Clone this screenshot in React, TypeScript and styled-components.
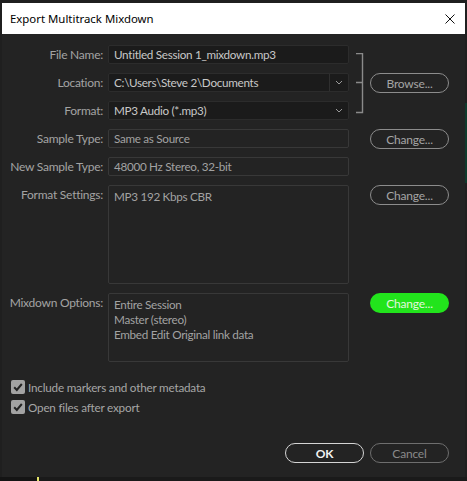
import React from "react";
import styled, { createGlobalStyle } from "styled-components";

const Global = createGlobalStyle`
  html, body { margin: 0; padding: 0; background: #1f1f1f; }
  body { width: 467px; height: 481px; overflow: hidden; font-family: Lato, "Noto Sans", sans-serif; }
  #root { width: 467px; height: 481px; }
`;

const Page = styled.div`
  display: flex;
  width: 467px;
  height: 481px;
  padding-top: 3px;
  box-sizing: border-box;
  background: #1f1f1f;
`;

const EdgeLeft = styled.div`
  width: 2px;
  flex: none;
`;

const EdgeRight = styled.div`
  width: 2px;
  flex: none;
  background: linear-gradient(
    to bottom,
    transparent 0px,
    transparent 100px,
    #0f3a2c 100px,
    #0f3a2c 180px,
    transparent 180px
  );
`;

const Dialog = styled.div`
  flex: 1;
  display: flex;
  flex-direction: column;
  background: #232323;
`;

const TitleBar = styled.div`
  height: 31px;
  background: #ffffff;
  display: flex;
  align-items: center;
  justify-content: space-between;
  padding: 0 10px 0 8px;
  font-family: "Noto Sans", "Open Sans", sans-serif;
  font-size: 11.4px;
  color: #000;
`;

const Content = styled.div`
  flex: 1;
  display: flex;
  flex-direction: column;
  padding: 11px 16px 0 0;
`;

const Form = styled.div`
  display: grid;
  grid-template-columns: 106px 241px 21px 79px;
  row-gap: 9px;
  grid-template-rows: 19px 19px 19px 19px 19px 99px 69px;
  align-items: start;
`;

const Label = styled.div<{ $row: number }>`
  grid-column: 1;
  grid-row: ${(p) => p.$row};
  text-align: right;
  padding-right: 5px;
  padding-top: 2px;
  font-size: 12px;
  color: #a3a3a3;
  white-space: nowrap;
  letter-spacing: -0.25px;
`;

const Field = styled.div<{ $row: number; $dark?: boolean; $h?: number }>`
  grid-column: 2;
  grid-row: ${(p) => p.$row};
  height: ${(p) => (p.$h ? p.$h : 19)}px;
  box-sizing: border-box;
  border: 1px solid ${(p) => (p.$dark ? "#2c2c2c" : "#383838")};
  background: ${(p) => (p.$dark ? "#1b1b1b" : "#232323")};
  border-radius: 2px;
  display: flex;
  align-items: ${(p) => (p.$h ? "flex-start" : "center")};
  padding: ${(p) => (p.$h ? "3px 0 0 5px" : "0 0 0 5px")};
  font-size: 11.7px;
  color: ${(p) => (p.$dark ? "#c8c8c8" : "#a2a2a2")};
  white-space: nowrap;
  overflow: hidden;
  letter-spacing: -0.3px;
`;

const FieldText = styled.span`
  flex: 1;
  line-height: 15px;
`;

const Lines = styled.div`
  display: flex;
  flex-direction: column;
  line-height: 15px;
`;

const DropDivider = styled.div<{ $line?: boolean }>`
  width: 18px;
  align-self: stretch;
  border-left: ${(p) => (p.$line ? "1px solid #2f2f2f" : "1px solid transparent")};
  display: flex;
  align-items: center;
  justify-content: center;
`;

const BracketCell = styled.div`
  grid-column: 3;
  grid-row: 1 / 4;
  align-self: stretch;
  display: flex;
  justify-content: flex-start;
  padding-top: 8px;
`;

const Pill = styled.button<{ $row?: number; $variant?: "normal" | "green" | "ok" | "cancel" }>`
  grid-column: 4;
  grid-row: ${(p) => p.$row ?? "auto"};
  width: 79px;
  height: 20px;
  border-radius: 10px;
  box-sizing: border-box;
  font-family: Lato, "Noto Sans", sans-serif;
  font-size: 12px;
  letter-spacing: -0.2px;
  padding: 0;
  cursor: default;
  background: ${(p) => (p.$variant === "green" ? "#22e41c" : "transparent")};
  border: ${(p) =>
    p.$variant === "green"
      ? "none"
      : p.$variant === "ok"
      ? "1.5px solid #d4d4d4"
      : p.$variant === "cancel"
      ? "1.5px solid #6e6e6e"
      : "1.5px solid #8c8c8c"};
  color: ${(p) =>
    p.$variant === "green"
      ? "#e2f7df"
      : p.$variant === "ok"
      ? "#f2f2f2"
      : p.$variant === "cancel"
      ? "#8a8a8a"
      : "#a5a5a5"};
  font-weight: ${(p) => (p.$variant === "ok" ? 700 : 400)};
`;

const Checks = styled.div`
  display: flex;
  flex-direction: column;
  gap: 6px;
  padding: 18px 0 0 9px;
`;

const CheckRow = styled.label`
  display: flex;
  align-items: center;
  gap: 3px;
  font-size: 11.7px;
  color: #a6a6a6;
  height: 14px;
  letter-spacing: -0.2px;
`;

const Box = styled.span`
  width: 14px;
  height: 14px;
  border-radius: 2px;
  background: #a3a3a3;
  display: flex;
  align-items: center;
  justify-content: center;
  flex: none;
`;

const Footer = styled.div`
  margin-top: auto;
  display: flex;
  justify-content: flex-end;
  gap: 6px;
  padding-bottom: 14px;
`;

const BottomStrip = styled.div`
  height: 4px;
  margin: 0 -2px;
  background: linear-gradient(
    to right,
    #141414 0px,
    #141414 37px,
    #e4e46a 37px,
    #e4e46a 39px,
    #1a1a1a 39px
  );
`;

const Chevron = () => (
  <svg width="8" height="5" viewBox="0 0 8 5">
    <path d="M1 1 L4 4 L7 1" fill="none" stroke="#9a9a9a" strokeWidth="1" />
  </svg>
);

const CheckMark = () => (
  <svg width="12" height="12" viewBox="0 0 12 12">
    <path d="M2.2 6.3 L4.8 8.9 L9.8 3" fill="none" stroke="#242424" strokeWidth="2" />
  </svg>
);

const CloseIcon = () => (
  <svg width="10" height="10" viewBox="0 0 10 10">
    <path d="M0.5 0.5 L9.5 9.5 M9.5 0.5 L0.5 9.5" stroke="#111" strokeWidth="1" />
  </svg>
);

const Bracket = () => (
  <svg width="16" height="61" viewBox="0 0 16 61">
    <path d="M7 0.5 H13.5 V59.5 H7 M7 29.5 H13.5" fill="none" stroke="#8a8a8a" strokeWidth="1.4" />
  </svg>
);

export default function App() {
  return (
    <>
      <Global />
      <Page>
        <EdgeLeft />
        <Dialog>
          <TitleBar>
            <span>Export Multitrack Mixdown</span>
            <CloseIcon />
          </TitleBar>
          <Content>
            <Form>
              <Label $row={1}>File Name:</Label>
              <Field $row={1} $dark>
                <FieldText>Untitled Session 1_mixdown.mp3</FieldText>
              </Field>

              <Label $row={2}>Location:</Label>
              <Field $row={2} $dark>
                <FieldText>C:\Users\Steve 2\Documents</FieldText>
                <DropDivider $line>
                  <Chevron />
                </DropDivider>
              </Field>
              <Pill $row={2}>Browse...</Pill>

              <Label $row={3}>Format:</Label>
              <Field $row={3} $dark>
                <FieldText>MP3 Audio (*.mp3)</FieldText>
                <DropDivider>
                  <Chevron />
                </DropDivider>
              </Field>

              <BracketCell>
                <Bracket />
              </BracketCell>

              <Label $row={4}>Sample Type:</Label>
              <Field $row={4}>
                <FieldText>Same as Source</FieldText>
              </Field>
              <Pill $row={4}>Change...</Pill>

              <Label $row={5}>New Sample Type:</Label>
              <Field $row={5}>
                <FieldText>48000 Hz Stereo, 32-bit</FieldText>
              </Field>

              <Label $row={6}>Format Settings:</Label>
              <Field $row={6} $h={99}>
                <FieldText>MP3 192 Kbps CBR</FieldText>
              </Field>
              <Pill $row={6}>Change...</Pill>

              <Label $row={7}>Mixdown Options:</Label>
              <Field $row={7} $h={69}>
                <Lines>
                  <span>Entire Session</span>
                  <span>Master (stereo)</span>
                  <span>Embed Edit Original link data</span>
                </Lines>
              </Field>
              <Pill $row={7} $variant="green">
                Change...
              </Pill>
            </Form>

            <Checks>
              <CheckRow>
                <Box>
                  <CheckMark />
                </Box>
                Include markers and other metadata
              </CheckRow>
              <CheckRow>
                <Box>
                  <CheckMark />
                </Box>
                Open files after export
              </CheckRow>
            </Checks>

            <Footer>
              <Pill $variant="ok">OK</Pill>
              <Pill $variant="cancel">Cancel</Pill>
            </Footer>
          </Content>
          <BottomStrip />
        </Dialog>
        <EdgeRight />
      </Page>
    </>
  );
}
